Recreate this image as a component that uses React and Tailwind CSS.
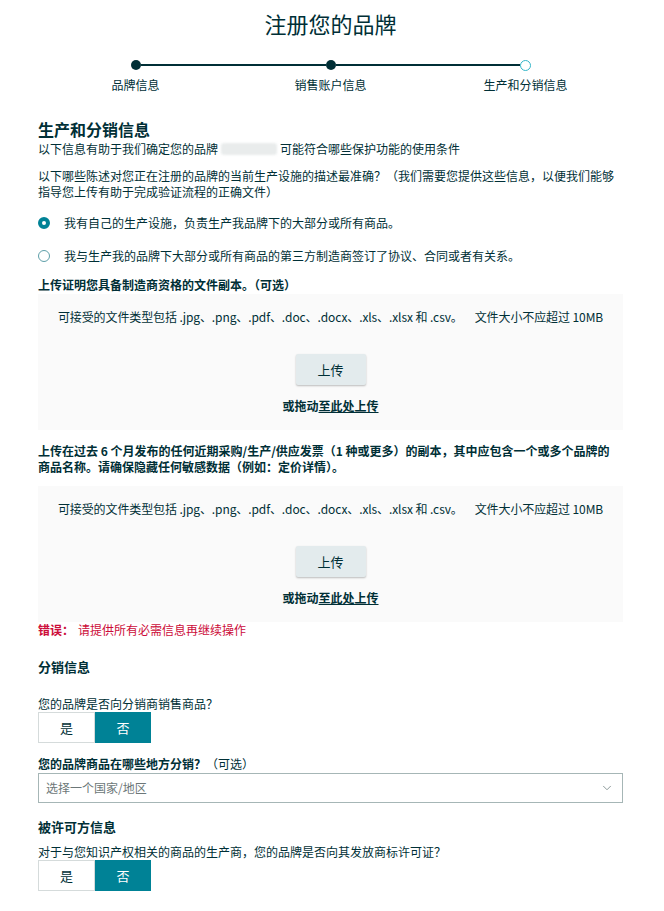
import React from "react";
import { ChevronDown } from "lucide-react";

const steps = ["品牌信息", "销售账户信息", "生产和分销信息"];

function Stepper() {
  return (
    <div className="mt-[22px] grid grid-cols-3">
      {steps.map((s, i) => (
        <div key={s} className="flex flex-col items-center">
          <div className="flex h-[10px] w-full items-center">
            <div className={`h-[2px] flex-1 ${i > 0 ? "bg-[#002f36]" : ""}`} />
            {i < 2 ? (
              <div className="h-[10px] w-[10px] rounded-full bg-[#002f36]" />
            ) : (
              <div className="h-[11px] w-[11px] rounded-full border border-[#33b6c9] bg-white" />
            )}
            <div className={`h-[2px] flex-1 ${i < 2 ? "bg-[#002f36]" : ""}`} />
          </div>
          <div className="mt-[7px] text-[12px] leading-[16px]">{s}</div>
        </div>
      ))}
    </div>
  );
}

function Radio({ checked, children, className }) {
  return (
    <div className={`flex h-[20px] items-center ${className}`}>
      {checked ? (
        <div className="h-[12px] w-[12px] shrink-0 rounded-full border-[4px] border-[#008296] bg-white" />
      ) : (
        <div className="h-[12px] w-[12px] shrink-0 rounded-full border border-[#5e9fa9] bg-white" />
      )}
      <span className="ml-[14px] text-[12px] leading-[16px]">{children}</span>
    </div>
  );
}

function UploadBox({ className }) {
  return (
    <div className={`flex h-[136px] flex-col items-center bg-[#fafafa] pt-[15px] ${className}`}>
      <div className="text-[12px] leading-[16px] tracking-[-0.1px]">
        可接受的文件类型包括 .jpg、.png、.pdf、.doc、.docx、.xls、.xlsx 和 .csv。
        <span className="ml-[12px]">文件大小不应超过 10MB</span>
      </div>
      <button className="mt-[29px] h-[31px] w-[70px] rounded-[2px] bg-[#e3ebed] text-[13px] text-[#002f36] shadow-[0_1px_2px_rgba(0,0,0,0.25)]">
        上传
      </button>
      <div className="mt-[13px] text-[12px] font-bold leading-[16px]">
        或拖动<span className="underline">至此处上传</span>
      </div>
    </div>
  );
}

function Toggle({ className }) {
  return (
    <div className={`flex h-[31px] w-[113px] ${className}`}>
      <div className="flex w-[57px] items-center justify-center border border-[#d5dbdb] bg-white text-[13px]">
        是
      </div>
      <div className="flex w-[56px] items-center justify-center bg-[#008296] text-[13px] text-white">
        否
      </div>
    </div>
  );
}

export default function App() {
  return (
    <div className="min-h-[911px] bg-white font-['Noto_Sans_CJK_SC','Noto_Sans',sans-serif] text-[#002f36]">
      <div className="ml-[38px] w-[585px] pt-[8px]">
        <h1 className="text-center text-[22px] leading-[30px]">注册您的品牌</h1>
        <div className="mt-[2px]" />
        <Stepper />

        <h2 className="mt-[25px] text-[16px] font-bold leading-[22px]">生产和分销信息</h2>
        <p className="mt-[1px] flex items-center text-[12px] leading-[16px]">
          以下信息有助于我们确定您的品牌
          <span className="mx-[3px] inline-block h-[12px] w-[56px] rounded-[3px] bg-[#e9ecec] blur-[1px]" />
          可能符合哪些保护功能的使用条件
        </p>
        <p className="mt-[11px] text-[12px] leading-[16px]">
          以下哪些陈述对您正在注册的品牌的当前生产设施的描述最准确？（我们需要您提供这些信息，以便我们能够指导您上传有助于完成验证流程的正确文件）
        </p>

        <Radio checked className="mt-[13px]">
          我有自己的生产设施，负责生产我品牌下的大部分或所有商品。
        </Radio>
        <Radio className="mt-[13px]">
          我与生产我的品牌下大部分或所有商品的第三方制造商签订了协议、合同或者有关系。
        </Radio>

        <p className="mt-[11px] text-[12px] font-bold leading-[16px]">
          上传证明您具备制造商资格的文件副本。（可选）
        </p>
        <UploadBox className="mt-[1px]" />

        <p className="mt-[13px] text-[12px] font-bold leading-[16px]">
          上传在过去 6 个月发布的任何近期采购/生产/供应发票（1 种或更多）的副本，其中应包含一个或多个品牌的
          <br />
          商品名称。请确保隐藏任何敏感数据（例如：定价详情）。
        </p>
        <UploadBox className="mt-[11px]" />
        <p className="text-[12px] leading-[16px] text-[#cc0c39]">
          <span className="font-bold">错误：</span>
          <span className="ml-[4px]">请提供所有必需信息再继续操作</span>
        </p>

        <h3 className="mt-[20px] text-[13px] font-bold leading-[18px]">分销信息</h3>
        <p className="mt-[20px] text-[12px] leading-[16px]">您的品牌是否向分销商销售商品？</p>
        <Toggle />

        <p className="mt-[13px] text-[12px] leading-[16px]">
          <span className="font-bold">您的品牌商品在哪些地方分销？</span>（可选）
        </p>
        <div className="mt-[1px] flex h-[30px] items-center justify-between border border-[#a6b6b6] bg-white pl-[7px] pr-[8px]">
          <span className="text-[12px] text-[#6c7778]">选择一个国家/地区</span>
          <ChevronDown size={14} strokeWidth={1.5} className="text-[#7d8b8c]" />
        </div>

        <h3 className="mt-[15px] text-[13px] font-bold leading-[18px]">被许可方信息</h3>
        <p className="mt-[8px] text-[12px] leading-[16px]">
          对于与您知识产权相关的商品的生产商，您的品牌是否向其发放商标许可证？
        </p>
        <Toggle />
      </div>
    </div>
  );
}
